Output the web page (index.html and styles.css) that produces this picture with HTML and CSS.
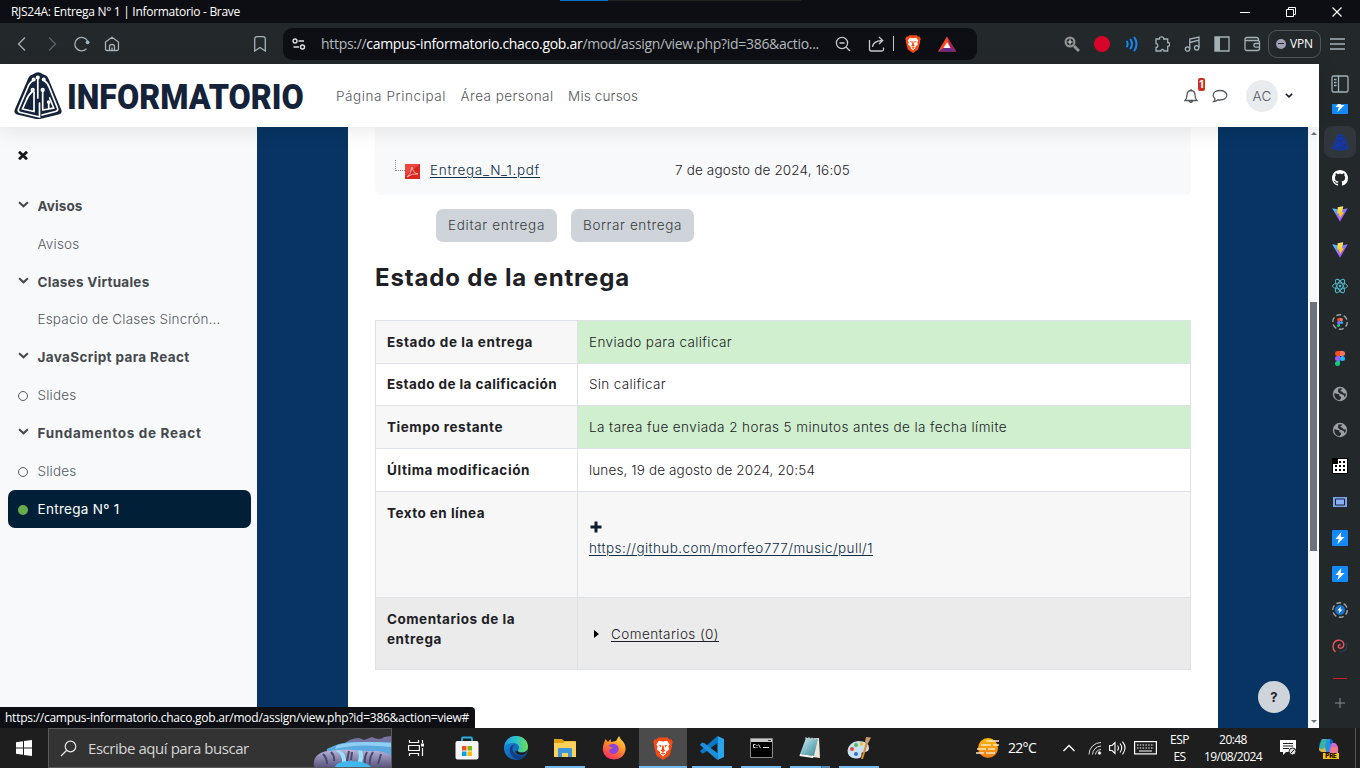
FILE: index.html
```html
<!DOCTYPE html>
<html lang="es">
<head>
<meta charset="utf-8">
<title>RJS24A: Entrega N° 1 | Informatorio</title>
<link rel="stylesheet" href="styles.css">
</head>
<body>
<svg class="defs" width="0" height="0">
  <defs>
    <linearGradient id="vp" x1="0" y1="0" x2="1" y2="1"><stop offset="0" stop-color="#41d1ff"/><stop offset=".6" stop-color="#9a5cff"/><stop offset="1" stop-color="#bd34fe"/></linearGradient>
    <linearGradient id="vy" x1="0" y1="0" x2="0" y2="1"><stop offset="0" stop-color="#ffea83"/><stop offset=".3" stop-color="#ffdd35"/><stop offset="1" stop-color="#ffa800"/></linearGradient>
    <linearGradient id="edgeA" x1="0" y1="0" x2="1" y2="0"><stop offset="0" stop-color="#1e9de0"/><stop offset=".5" stop-color="#2fc3c8"/><stop offset="1" stop-color="#6fdc4e"/></linearGradient>
    <linearGradient id="edgeB" x1="0" y1="0" x2="1" y2="1"><stop offset="0" stop-color="#1b93e0"/><stop offset="1" stop-color="#0c4a9c"/></linearGradient>
    <linearGradient id="ff" x1=".8" y1="0" x2=".2" y2="1"><stop offset="0" stop-color="#ffe040"/><stop offset=".45" stop-color="#ff8a2a"/><stop offset="1" stop-color="#f5246b"/></linearGradient>
    <linearGradient id="note" x1="0" y1="0" x2="1" y2="1"><stop offset="0" stop-color="#d9f2f5"/><stop offset=".5" stop-color="#7db9c6"/><stop offset="1" stop-color="#3f8798"/></linearGradient>
    <linearGradient id="sun" x1="0" y1="0" x2="0" y2="1"><stop offset="0" stop-color="#ffb900"/><stop offset="1" stop-color="#f17a1c"/></linearGradient>
    <linearGradient id="rock" x1="0" y1="0" x2="0" y2="1"><stop offset="0" stop-color="#b9b7dc"/><stop offset="1" stop-color="#5a5780"/></linearGradient>
    <symbol id="brave" viewBox="0 0 20 24"><path d="M5.500 1.500h9l2 2 1.800-.2 1.500 3-1 2.300.3 1.500-2.600 9.400L10 24l-6.500-4.500L.9 10.100l.3-1.500-1-2.300 1.500-3 1.800.2z" fill="#fb4a12"/><path d="M6 4.800l4 .6 4-.6 2.600 3.400-1.300 2.600.9 2.500-3.500 3 .6 1.300L10 20.500l-3.300-2.900.6-1.300-3.500-3 .9-2.500-1.300-2.600z" fill="#fff"/><path d="M5.500 8.500l3 1-.6 2zM14.500 8.500l-3 1 .6 2zM9.300 9.500h1.400l.5 4 1.300 1-2.500 1.700-2.500-1.700 1.300-1zM7.500 17.500l2.500-1 2.500 1-2.500 1z" fill="#fb4a12"/></symbol>
    <symbol id="vite" viewBox="0 0 16 16"><path d="M.2 2.300L8 15.800l7.800-13.500L8 3.700z" fill="url(#vp)"/><path d="M11.300.2L5.700 1.300l-.4 6.500 2-.4-.6 2.500 1.300-.3-.8 3.700L12 6.300l-2.100.3z" fill="url(#vy)"/></symbol>
    <symbol id="globe" viewBox="0 0 16 16"><circle cx="8" cy="8" r="7.200" fill="#9aa0a3"/><path d="M2.200 7.300c1.800-.6 2.500.9 4 .8 1.700 0 1.400 1.200.8 2 1 .3 2.300.6 2 2-.2 1-1.200 1.500-1.600 2.200C4.500 14 2 11.500 2.200 7.300zM6 2.800c2-1 3.300-.6 4.600 0-.8 1-2 .8-2.300 2 .8.900 2 .4 2.600 1.600.8 1.300 1.900 1.100 3 .8.100 2-.6 3.200-1.200 4-.6-.9-.6-2.400-2.100-2.700C8.400 8.200 7 7.300 6.200 6.100c-.8-1.100.7-2-.2-3.300z" fill="#25292c"/></symbol>
    <symbol id="bolt" viewBox="0 0 16 16"><rect width="16" height="16" rx="1.200" fill="#1389fd"/><path d="M9.300 2L3.500 9h3.300l-1.500 5.300L12.500 7H8.700z" fill="#fff"/></symbol>
    <symbol id="figma" viewBox="0 0 10 15"><path d="M2.500 0H5v5H2.500a2.500 2.500 0 010-5z" fill="#f24e1e"/><path d="M5 0h2.500a2.500 2.500 0 010 5H5z" fill="#ff7262"/><path d="M2.500 5H5v5H2.500a2.500 2.500 0 010-5z" fill="#a259ff"/><circle cx="7.500" cy="7.500" r="2.500" fill="#1abcfe"/><path d="M2.500 10H5v2.500A2.500 2.500 0 112.500 10z" fill="#0acf83"/></symbol>
    <symbol id="prism" viewBox="0 0 48 48"><path d="M19.500 2q4.500-3.500 9 0l4 1.800Q34 5 35 8l12 29q2 4.500-2.500 5.500L28 46.500q-4 1-8 0L3 42.500Q-1 41.500 1 37L13.500 8q1-3 2.500-4.200z" fill="currentColor"/><g class="prism-lines" fill="none" stroke-width="1.700" stroke-linecap="round"><path d="M23.800 6v20M19.700 8Q15 11 13.500 16L4.500 37q-1 2.800 2 3.500L25.500 45V31M29.700 8Q34 11 35.500 16l8 20q1 2.800-2 3.500L28 43M18.700 19Q14 23 12 29l-3.500 8L20 39.500V20M28.700 18v19.500M34.700 31v5.500M28.700 38l11-2-4-10"/><circle cx="18.700" cy="18" r="1.300"/><circle cx="28.700" cy="18" r="1.300"/><circle cx="19.700" cy="7.500" r="1.200"/><circle cx="29.700" cy="7.500" r="1.200"/><circle cx="23.800" cy="5.500" r="1.200"/><circle cx="34.700" cy="30" r="1"/></g></symbol>
    <symbol id="chev" viewBox="0 0 10 6"><path d="M1 1l4 3.700L9 1" fill="none" stroke="currentColor" stroke-width="1.900"/></symbol>
  </defs>
</svg>

<div class="titlebar">
  <span class="title"><span class="m-title">RJS24A: Entrega N° 1 | Informatorio - Brave</span></span>
  <div class="loading"><i></i></div>
  <div class="winbtns">
    <svg width="10" height="12" viewBox="0 0 10 12"><path d="M0 6.500h10" stroke="#fff"/></svg>
    <svg width="10" height="12" viewBox="0 0 10 12"><path d="M.5 3.500h7v7h-7zM2.500 3V1.500h7v7H8" fill="none" stroke="#fff"/></svg>
    <svg width="10" height="12" viewBox="0 0 10 12"><path d="M.5 1.500l9 9M9.500 1.500l-9 9" stroke="#fff" stroke-width="1.200"/></svg>
  </div>
</div>

<div class="toolbar">
  <div class="navbtns">
    <svg width="16" height="16" viewBox="0 0 16 16"><path d="M11 1.500L4.500 8l6.500 6.500" class="ic"/></svg>
    <svg width="16" height="16" viewBox="0 0 16 16"><path d="M5 1.500L11.500 8 5 14.500" class="ic dim"/></svg>
    <svg width="16" height="16" viewBox="0 0 16 16"><path d="M12.500 12.700A6.700 6.700 0 1113.500 5" class="ic"/><circle cx="13.600" cy="6.300" r="1.900" fill="#a3b2b9"/></svg>
    <svg width="16" height="16" viewBox="0 0 16 16"><path d="M1.500 6L8 1.200 14.500 6v7q0 1.500-1.500 1.500H3Q1.500 14.500 1.500 13zM5.500 14.500v-4q0-2 2.500-2t2.500 2v4M8 14.500v-3" class="ic"/></svg>
  </div>
  <svg class="bookmark" width="12" height="16" viewBox="0 0 12 16"><path d="M.7 3Q.7.700 3 .7h6q2.300 0 2.300 2.300v12L6 11.500.7 15z" class="ic"/></svg>
  <div class="omnibox">
    <svg width="14" height="12" viewBox="0 0 14 12" fill="none" stroke="#dde1e3" stroke-width="1.400"><circle cx="3" cy="3" r="2"/><circle cx="10.500" cy="9" r="2"/><path d="M6.500 3H12M1.500 9h5.500"/></svg>
    <span class="url"><span class="m-url">https://<b>campus-informatorio.chaco.gob.ar</b>/mod/assign/view.php?id=386&amp;actio...</span></span>
    <svg width="16" height="16" viewBox="0 0 16 16"><circle cx="7" cy="7" r="5.600" class="ic l"/><path d="M4.500 7h5M11 11l4 4" class="ic l"/></svg>
    <svg class="share" width="17" height="16" viewBox="0 0 17 16"><path d="M1.500 4v9q0 2 2 2H14q1.500 0 1.500-1.500v-2M4.500 11Q5 5 14 4.500M11 1l3.700 3.500L11 8" class="ic l"/></svg>
    <i class="vsep"></i>
    <svg class="shield" width="16" height="19"><use href="#brave"/></svg>
    <svg class="bat" width="18" height="16" viewBox="0 0 18 16"><path d="M9 .500L0 15.500h18z" fill="#ff4724"/><path d="M9 .500l9 15-5.500-3.500z" fill="#9e1f63"/><path d="M0 15.500h18L12.500 12h-7z" fill="#662d91"/><path d="M9 6.200L12.500 12h-7z" fill="#fff"/></svg>
  </div>
  <div class="exts">
    <svg width="16" height="16" viewBox="0 0 16 16"><circle cx="6" cy="6" r="4.400" fill="none" stroke="#929292" stroke-width="2.200"/><path d="M10 10l5 5" stroke="#929292" stroke-width="3"/><path d="M3.500 6h5M6 3.500v5" stroke="#ddd" stroke-width="1.200"/></svg>
    <svg width="16" height="16" viewBox="0 0 16 16"><circle cx="8" cy="8" r="8" fill="#d90429"/></svg>
    <svg width="16" height="16" viewBox="0 0 16 16" fill="none" stroke="#1687f0" stroke-width="2" stroke-linecap="round"><path d="M3 5.500q1.500 2.500 0 5M6.500 3.500q3 4.500 0 9M10.500 1.500q4 6.500 0 13"/></svg>
    <svg width="16" height="16" viewBox="0 0 16 16"><path d="M2 3h3.500Q5 .8 7.500.8T9.700 3h4v3.500q2 0 2 2t-2 2v4.500H10q.2-1.500-1.500-1.500T7 15H2v-3.500q2 0 1.800-2T2 7.500z" class="ic"/></svg>
    <svg width="16" height="16" viewBox="0 0 16 16"><path d="M5.800 13V3l9.200-2v10.500M5.800 6.500L15 4.200" class="ic"/><circle cx="3.500" cy="13" r="2.200" class="ic"/><circle cx="12.700" cy="11.800" r="2.200" class="ic"/></svg>
    <svg width="16" height="16" viewBox="0 0 16 16"><path d="M1 1h14v14H1z" class="ic"/><path d="M1 1h5v14H1z" fill="#a3b2b9"/></svg>
    <svg width="17" height="16" viewBox="0 0 17 16"><path d="M1 5V3.500Q1 1.500 3 1.500h9.500q2 0 2 2V5M1 4.500h12.500q2 0 2 2v6q0 2-2 2H3q-2 0-2-2zM15.500 7.500h-4q-1.700 0-1.700 1.800t1.700 1.800h4" class="ic"/></svg>
  </div>
  <div class="vpn"><i></i><span class="m-vpn">VPN</span></div>
  <svg class="burger" width="15" height="12" viewBox="0 0 15 12"><path d="M0 1h15M0 6h15M0 11h15" class="ic"/></svg>
</div>

<div class="middle">
  <div class="page">
    <header class="header">
      <svg class="logo" width="48" height="48"><use href="#prism"/></svg>
      <span class="brand"><span class="m-brand">INFORMATORIO</span></span>
      <nav class="nav"><a class="m-n1">Página Principal</a><a class="m-n2">Área personal</a><a class="m-n3">Mis cursos</a></nav>
      <div class="user">
        <span class="bell"><svg width="14" height="16" viewBox="0 0 14 16" fill="none" stroke="#555a5e" stroke-width="1.300"><path d="M1 12.500q2-2 2-5.500 0-4.200 4-4.500 4 .3 4 4.500 0 3.500 2 5.500zM7 1v1.500"/><path d="M5.500 13.300q1.500 2.200 3 0z" fill="#555a5e"/></svg><em>1</em></span>
        <svg class="chat" width="16" height="14" viewBox="0 0 16 14"><path d="M8 1.500c4 0 6.800 2 6.800 4.800S12 11 8 11q-1.200 0-2-.2Q4 12.700 1.500 12.700 3 11.300 3 9.700 1.200 8.300 1.200 6.300C1.200 3.500 4 1.500 8 1.500z" fill="none" stroke="#555a5e" stroke-width="1.300"/></svg>
        <span class="avatar"><span class="m-ac">AC</span></span>
        <svg class="caret" width="8" height="5"><use href="#chev"/></svg>
      </div>
    </header>
    <div class="content">
      <aside class="drawer">
        <div class="close"><svg width="10" height="9" viewBox="0 0 10 9"><path d="M1 .8l8 7.400M9 .8L1 8.200" stroke="#16191c" stroke-width="2.900"/></svg></div>
        <div class="row sec"><svg class="ch" width="11" height="7"><use href="#chev"/></svg><span class="m-s1">Avisos</span></div>
        <div class="row"><span class="m-s2">Avisos</span></div>
        <div class="row sec"><svg class="ch" width="11" height="7"><use href="#chev"/></svg><span class="m-s3">Clases Virtuales</span></div>
        <div class="row"><span class="m-s4">Espacio de Clases Sincrón...</span></div>
        <div class="row sec"><svg class="ch" width="11" height="7"><use href="#chev"/></svg><span class="m-s5">JavaScript para React</span></div>
        <div class="row"><i class="dot"></i><span class="m-s6">Slides</span></div>
        <div class="row sec"><svg class="ch" width="11" height="7"><use href="#chev"/></svg><span class="m-s7">Fundamentos de React</span></div>
        <div class="row"><i class="dot"></i><span class="m-s6">Slides</span></div>
        <div class="row active"><i class="dot"></i><span class="m-s8">Entrega Nº 1</span></div>
      </aside>
      <main class="main">
        <div class="sheet">
          <div class="filebox">
            <i class="tree"></i>
            <svg class="pdf" width="15" height="15" viewBox="0 0 15 15"><rect width="15" height="15" fill="#d9261f"/><path d="M0 0h15L0 12z" fill="#ee4540"/><path d="M2 13Q6 10 7 3q1 6 6 7Q7 9 2 13" fill="none" stroke="#f9b5ae" stroke-width="1"/></svg>
            <a class="file"><span class="m-f1">Entrega_N_1.pdf</span></a>
            <span class="m-f2">7 de agosto de 2024, 16:05</span>
          </div>
          <div class="buttons"><button class="b1"><span class="m-b1">Editar entrega</span></button><button class="b2"><span class="m-b2">Borrar entrega</span></button></div>
          <h3><span class="m-h">Estado de la entrega</span></h3>
          <table>
            <tr class="r1 odd"><th><span class="m-t1">Estado de la entrega</span></th><td class="ok"><span class="m-d1">Enviado para calificar</span></td></tr>
            <tr class="r2"><th><span class="m-t2">Estado de la calificación</span></th><td><span class="m-d2">Sin calificar</span></td></tr>
            <tr class="r3 odd"><th><span class="m-t3">Tiempo restante</span></th><td class="ok"><span class="m-d3">La tarea fue enviada 2 horas 5 minutos antes de la fecha límite</span></td></tr>
            <tr class="r4"><th><span class="m-t4">Última modificación</span></th><td><span class="m-d4">lunes, 19 de agosto de 2024, 20:54</span></td></tr>
            <tr class="r5 odd"><th><span class="m-t5">Texto en línea</span></th><td><svg class="plus" width="12" height="12" viewBox="0 0 12 12"><path d="M6 .500v11M.5 6h11" stroke="#0b1e30" stroke-width="3"/></svg><br><a class="m-d5">https://github.com/morfeo777/music/pull/1</a></td></tr>
            <tr class="r6 hov"><th><span class="m-t6">Comentarios de la</span><br><span class="m-t7">entrega</span></th><td><svg class="tri" width="5" height="8" viewBox="0 0 5 8"><path d="M0 0l5 4-5 4z"/></svg><a class="m-d6">Comentarios (0)</a></td></tr>
          </table>
        </div>
        <div class="help">?</div>
      </main>
      <div class="scroll"><b class="up"></b><i></i><b class="down"></b></div>
    </div>
    <div class="status"><span class="m-st">https://campus-informatorio.chaco.gob.ar/mod/assign/view.php?id=386&amp;action=view#</span></div>
  </div>
  <div class="side">
    <svg class="panel" width="18" height="18" viewBox="0 0 18 18"><rect x="1" y="1" width="16" height="16" rx="1.500" class="ic"/><path d="M7.500 1v16" class="ic"/><path d="M3 4.500h2.500M3 7.500h2.500M3 10.500h2.500" class="ic"/></svg>
    <div class="clip"><svg width="16" height="16"><use href="#bolt"/></svg></div>
    <div class="cell sel"><svg class="mini" width="17" height="17"><use href="#prism"/></svg></div>
    <div class="cell"><svg width="16" height="16" viewBox="0 0 16 16"><path fill="#fff" d="M8 0C3.580 0 0 3.580 0 8c0 3.540 2.290 6.530 5.470 7.590.4.070.55-.17.55-.38 0-.19-.01-.82-.01-1.490-2.010.37-2.530-.49-2.690-.94-.09-.23-.48-.94-.82-1.130-.28-.15-.68-.52-.01-.53.63-.01 1.080.58 1.230.82.72 1.210 1.870.87 2.330.66.070-.52.28-.87.51-1.070-1.780-.2-3.640-.89-3.640-3.950 0-.87.31-1.590.82-2.150-.08-.2-.36-1.020.08-2.120 0 0 .67-.21 2.200.82.640-.18 1.320-.27 2-.27s1.360.09 2 .27c1.530-1.040 2.200-.82 2.200-.82.44 1.100.16 1.920.08 2.120.51.560.82 1.270.82 2.150 0 3.070-1.870 3.750-3.650 3.950.29.25.54.73.54 1.480 0 1.070-.01 1.930-.01 2.200 0 .21.15.46.55.38A8.010 8.010 0 0016 8c0-4.420-3.580-8-8-8z"/></svg></div>
    <div class="cell"><svg width="16" height="16"><use href="#vite"/></svg></div>
    <div class="cell"><svg width="16" height="16"><use href="#vite"/></svg></div>
    <div class="cell"><svg width="16" height="16" viewBox="0 0 16 16" fill="none" stroke="#53b9cc" stroke-width=".9"><ellipse cx="8" cy="8" rx="7.500" ry="3"/><ellipse cx="8" cy="8" rx="7.500" ry="3" transform="rotate(60 8 8)"/><ellipse cx="8" cy="8" rx="7.500" ry="3" transform="rotate(120 8 8)"/><circle cx="8" cy="8" r="1" fill="#53b9cc"/></svg></div>
    <div class="cell ring"><svg width="16" height="16" viewBox="0 0 16 16"><circle cx="8" cy="8" r="7.300" class="dash"/></svg><svg class="inner" width="6" height="9"><use href="#figma"/></svg></div>
    <div class="cell"><svg width="10" height="15"><use href="#figma"/></svg></div>
    <div class="cell"><svg width="16" height="16"><use href="#globe"/></svg></div>
    <div class="cell"><svg width="16" height="16"><use href="#globe"/></svg></div>
    <div class="cell"><svg width="16" height="16" viewBox="0 0 16 16"><path d="M0 0h16v16H0z"/><path d="M6 1h9v14H1V6h5z" fill="#fff"/><path d="M7 3h2v2H7zM11 3h2v2h-2zM3 7h2v2H3zM7 7h2v2H7zM11 7h2v2h-2zM3 11h2v2H3zM7 11h2v2H7zM11 11h2v2h-2z"/></svg></div>
    <div class="cell"><svg width="14" height="10" viewBox="0 0 14 10"><path d="M0 0h14v10H0z" fill="#7ba4ee"/><path d="M2.500 2h9v6h-9z" fill="#8ab0f5" stroke="#1b2130"/></svg></div>
    <div class="cell"><svg width="16" height="16"><use href="#bolt"/></svg></div>
    <div class="cell"><svg width="16" height="16"><use href="#bolt"/></svg></div>
    <div class="cell"><svg width="16" height="16" viewBox="0 0 16 16"><circle cx="8" cy="8" r="7.300" class="dash"/><circle cx="8" cy="8" r="5" fill="#1674d0"/><path d="M8.800 4.500L5.500 8.500h2l-.8 3L10.500 7.500H8.500z" fill="#fff"/></svg></div>
    <div class="cell"><svg width="16" height="16" viewBox="0 0 16 16" fill="none" stroke-linecap="round"><path d="M8.500 14q5-.5 6-4.500.500-2-.500-4" stroke="#2d3750" stroke-width="1.500"/><path d="M3 13.500C-.5 9.500 1 3 6 2.200c4.500-.7 6.500 3 5.500 6-.9 2.600-5 2.700-5.300.3-.1-1.400 1-2 2-1.500" stroke="#e8555a" stroke-width="1.400"/></svg></div>
    <div class="cell last"><i></i></div>
    <svg class="add" width="10" height="10" viewBox="0 0 10 10"><path d="M5 0v10M0 5h10" stroke="#858c90"/></svg>
  </div>
</div>

<div class="taskbar">
  <svg class="win" width="16" height="16" viewBox="0 0 16 16"><path d="M0 2.200l7-1v6.300H0zM8 1.100L16 0v7.500H8zM0 8.500h7v6.300l-7-1zM8 8.500h8V16l-8-1.100z" fill="#fff"/></svg>
  <div class="search">
    <svg width="17" height="17" viewBox="0 0 17 17" fill="none" stroke="#e8e8e8" stroke-width="1.200"><circle cx="10.500" cy="6.500" r="5.300"/><path d="M6.500 10.500L1 16"/></svg>
    <span class="m-se">Escribe aquí para buscar</span>
    <svg class="falls" width="78" height="32" viewBox="0 0 78 32"><path d="M30 10Q36 3 46 3l5 2 8-3q8 4 12 0l7-1v18H30z" fill="#77749f"/><path d="M14 14Q30 5 50 7h28v24H12z" fill="#5aa9e0"/><path d="M24 10q20-5 54-2v4Q44 8 22 14z" fill="#8fd0f2"/><path d="M1 32q-2-14 14-16 20-3 34 0h16q13 2 13 6v10z" fill="url(#rock)"/><path d="M10 19q4 4 4 10M18 17q4 4 3 9M36 16l-2 10M39 17l-1 8M54 17q-3 5-2 12M60 17q-4 6-3 12M68 19l-3 10" fill="none" stroke="#4b476f" stroke-width="2"/><path d="M22 15.500q8 3 7 13h4q1-10-6-13zM45 15.500q2 7-1 13h5q2-7 0-13z" fill="#9be0fa"/><path d="M22 32q2-6 16-6t20 6z" fill="#40b8ee"/></svg>
  </div>
  <svg class="tv" width="17" height="16" viewBox="0 0 17 16" fill="none" stroke="#f4f4f4" stroke-width="1.200"><path d="M1.500 0v2.500h9V0M1.500 16v-2.500h9V16M.6 5.500h10.800v5H.6zM14.500 0v3M14.500 8v8"/><path d="M13 3.500h3v3h-3z" fill="#f4f4f4" stroke="none"/></svg>
  <div class="apps">
    <div class="app"><svg width="24" height="24" viewBox="0 0 24 24"><path d="M7 7V2.500q0-1 1-1h8q1 0 1 1V7" fill="none" stroke="#27b0e6" stroke-width="1.800"/><rect y="5" x=".5" width="23" height="18.500" rx="2" fill="#f5f5f5"/><path d="M7 10h4.500v4.500H7z" fill="#f25022"/><path d="M12.500 10H17v4.500h-4.500z" fill="#7fba00"/><path d="M7 15.500h4.500V20H7z" fill="#00a4ef"/><path d="M12.500 15.500H17V20h-4.500z" fill="#ffb900"/></svg></div>
    <div class="app"><svg width="24" height="24" viewBox="0 0 24 24"><circle cx="12" cy="12" r="12" fill="url(#edgeB)"/><path d="M.5 10C1.500 4 6 0 12 0c7 0 12 5 12 10.500 0 4-3 6-6 6-2.500 0-4-1-4-2 0-.8 1-1.500 1-3 0-2.500-2.500-4.500-6-4.500-4 0-7.500 2-8.500 3z" fill="url(#edgeA)"/><path d="M8.500 13c0-2 1.500-4 3-4.500C7 8 5 12 6 16c1 4.500 5 7.500 8.500 7.700 3.500-.7 6-2.700 7.500-5.200-6 3-13 0-13.500-5.500z" fill="#123e84"/><path d="M14 14.500q-.5 2 4 2 4 0 5.500-3-1 5-4.500 5.200-6 1-8-3.200z" fill="#1e1e1e"/></svg></div>
    <div class="app run"><svg width="22" height="20" viewBox="0 0 22 20"><path d="M0 1h8l2 2h11q1 0 1 1v15H0z" fill="#e0a010"/><path d="M0 5h9l2-1.500h11V19H0z" fill="#fdd25c"/><path d="M4 19v-8q0-1 1-1h12q1 0 1 1v8h-4v-4H8v4z" fill="#3b96dc"/></svg></div>
    <div class="app"><svg width="24" height="24" viewBox="0 0 24 24"><path d="M2 7l1.500-4L6 6l2.500-3 .5 3 5-1 3-5q1 3 4 5.500 3 4 2.500 8.500Q22 23 12 23.500 2 23 .8 14 .5 10 2 7z" fill="url(#ff)"/><path d="M8 8.500q4-2 7.500 1 2.500 4-.5 7-4 3-7 0Q5.500 13 11 12L6.500 10z" fill="#8b45d8"/></svg></div>
    <div class="app on"><svg width="20" height="24"><use href="#brave"/></svg></div>
    <div class="app run"><svg width="24" height="24" viewBox="0 0 24 24"><path d="M17.500 0L24 3v18l-6.500 3z" fill="#2aa5ee"/><path d="M17.500 0L0 15l2 2.500 2-.5L18 6.500z" fill="#0a78c8"/><path d="M17.500 24L0 9l2-2.500 2 .5 14 10.500z" fill="#1c90dc"/></svg></div>
    <div class="app run"><svg width="23" height="20" viewBox="0 0 23 20"><path d="M.5.500h22v19H.5z" fill="#000" stroke="#8a8a8a"/><path d="M1 1h21v3H1z" fill="#c9c9c9"/><path d="M18 2.500h3" stroke="#333"/><path d="M5.500 6.500H3.500v3h2M7 7v1M7 9v1M8.500 6.500l2 3.500M13 9.500h6" stroke="#ddd" fill="none"/></svg></div>
    <div class="app run two"><svg width="24" height="24" viewBox="0 0 24 24"><path d="M8 3l13-1 1 20-7-1z" fill="#ece8d8"/><path d="M8 2l12 1-4 17-14-2z" fill="url(#note)"/><path d="M2 18l14 2-1 2L1.500 20z" fill="#fafafa"/><path d="M8 1v2M11 1v2M14 1.500v2M17 2v2" stroke="#ccc"/></svg></div>
    <div class="app run"><svg width="24" height="24" viewBox="0 0 24 24"><path d="M11 5q11 0 11 7 0 4-5 4-3 0-2.500 3 0 4-6 3.500-8-1-8-8Q2 6 11 5z" fill="#c8e0f0"/><circle cx="5" cy="13" r="2" fill="#e8443a"/><circle cx="9" cy="9" r="2" fill="#58b958"/><circle cx="14.500" cy="8" r="1.800" fill="#f3c02c"/><circle cx="9" cy="18" r="2" fill="#3a6cd0"/><path d="M14 23l5-17 2 1-5 16z" fill="#e08a2c"/><path d="M18 6l1-5 5 .5-3 6z" fill="#c99b6c"/></svg></div>
  </div>
  <div class="weather">
    <svg width="24" height="22" viewBox="0 0 24 22"><circle cx="12" cy="11" r="10" fill="url(#sun)"/><path d="M10 4h13M5 8h10M17 8h6M1 12h9M12 12h7M0 16h8M10 16h9" stroke="#fde8c8" stroke-width="1.700"/></svg>
    <span class="m-we">22°C</span>
  </div>
  <div class="tray">
    <svg width="12" height="8" viewBox="0 0 12 8"><path d="M.5 7L6 1.500 11.500 7" fill="none" stroke="#fff" stroke-width="1.300"/></svg>
    <svg class="wifi" width="14" height="14" viewBox="0 0 14 14" fill="none" stroke="#ddd"><path d="M1 13.500A12 12 0 0113 1.500M4.500 13.500A9 9 0 0113 5M7.500 13.500A6 6 0 0113 8.500"/><circle cx="11.500" cy="12" r="1.300" fill="#fff"/></svg>
    <svg class="vol" width="17" height="14" viewBox="0 0 17 14" fill="none" stroke="#fff" stroke-width="1.100"><path d="M.6 4.500h2.500L6 1.500v11l-2.900-3H.6zM8.500 4.500q2 2.500 0 5M11 2.500q3.500 4.500 0 9M13.500 .7q5 6.300 0 12.600"/></svg>
    <svg class="kb" width="23" height="14" viewBox="0 0 23 14"><rect x=".6" y=".6" width="21.800" height="12.300" fill="none" stroke="#fff" stroke-width="1.200"/><path d="M3 4h17M3 7h17" stroke="#fff" stroke-dasharray="1.500 1.300"/><path d="M5 10h13" stroke="#fff"/></svg>
  </div>
  <div class="two-line lang"><span class="m-esp">ESP</span><span class="m-esp">ES</span></div>
  <div class="two-line clock"><span class="m-tm">20:48</span><span class="m-tm">19/08/2024</span></div>
  <svg class="notif" width="17" height="16" viewBox="0 0 17 16"><path d="M0 0h16v12H6l-3 3v-3H0z" fill="#fff"/><path d="M3 3.500h10M3 6h10M3 8.500h6" stroke="#1e1e1e"/><circle cx="12.500" cy="11.500" r="3.500" fill="#ddd" stroke="#1e1e1e"/><path d="M10.500 13.500l4-4" stroke="#1e1e1e"/></svg>
  <div class="copilot"><svg width="22" height="20" viewBox="0 0 22 20"><path d="M4 1h8q2 0 3 3l-3 10H6q-4 0-5-2 0-7 3-11z" fill="#2292e0"/><path d="M4 1h5L6 12q-4 2-5-1z" fill="#3ab3a0"/><path d="M1 10q3 3 6-1l1 5H5q-4 0-4-4z" fill="#e8b53a"/><path d="M12 1q2.500 0 3.500 4L12 6z" fill="#1656c0"/><path d="M14 5h3q4 2 3 10h-8l-1-2z" fill="#d866c8"/><path d="M14 9h5.500l.5 6h-8z" fill="#f07a8a"/></svg><em>PRE</em></div>
  <i class="desk"></i>
</div>
</body>
</html>
```

FILE: styles.css
```css
* { box-sizing: border-box; }
html, body { margin: 0; height: 768px; overflow: hidden; }
body { display: flex; flex-direction: column; width: 1360px; font: 300 13.500px/20px Inter, "Noto Sans", sans-serif; color: #1d2125; background: #fff; }
svg { display: block; flex: none; }
span, a { white-space: nowrap; }
.defs { position: absolute; }
.ic { fill: none; stroke: #a3b2b9; stroke-width: 1.300; }
.ic.dim { stroke: #596166; }
.ic.l { stroke: #c3c9cc; }

/* Tracking per label */
.m-title { letter-spacing: -.29px; }
.m-url { letter-spacing: -.307px; }
.m-vpn { letter-spacing: -.14px; }
.m-brand { display: inline-block; transform: scaleX(.92); transform-origin: 0 50%; }
.m-n1 { letter-spacing: .6px; }
.m-n2 { letter-spacing: .45px; }
.m-n3 { letter-spacing: .164px; }
.m-ac { letter-spacing: .23px; }
.m-s1 { letter-spacing: .112px; }
.m-s2, .m-s6 { letter-spacing: .2px; }
.m-s3 { letter-spacing: .263px; }
.m-s4 { letter-spacing: .176px; }
.m-s5 { letter-spacing: .361px; }
.m-s7 { letter-spacing: .67px; }
.m-s8 { letter-spacing: .297px; }
.m-f1 { letter-spacing: .707px; }
.m-f2 { letter-spacing: .153px; }
.m-b1 { letter-spacing: .693px; }
.m-b2 { letter-spacing: .608px; }
.m-h { letter-spacing: .838px; }
.m-t1 { letter-spacing: .599px; }
.m-t2 { letter-spacing: .416px; }
.m-t3 { letter-spacing: .54px; }
.m-t4 { letter-spacing: .589px; }
.m-t5 { letter-spacing: .47px; }
.m-t6 { letter-spacing: .505px; }
.m-t7 { letter-spacing: .576px; }
.m-d1 { letter-spacing: .379px; }
.m-d2 { letter-spacing: .34px; }
.m-d3 { letter-spacing: .42px; }
.m-d4 { letter-spacing: .127px; }
.m-d5 { letter-spacing: .425px; }
.m-d6 { letter-spacing: .429px; }
.m-st { letter-spacing: -.255px; }
.m-se { letter-spacing: -.45px; }
.m-we { letter-spacing: -.7px; }
.m-esp { letter-spacing: -.5px; }
.m-tm { letter-spacing: -.56px; }

.titlebar, .toolbar, .taskbar, .status { font-family: "Open Sans", "Noto Sans", sans-serif; font-weight: 400; color: #fff; }
.titlebar { height: 23px; flex: none; background: #0d0e13; display: flex; justify-content: space-between; padding: 0 18px 0 11px; font-size: 12px; line-height: 23px; }
.title { width: 499px; }
.loading { width: 241px; height: 1px; background: #222; margin-right: auto; margin-left: 50px; }
.loading i { display: block; width: 48px; height: 1px; background: #0a6fc9; }
.winbtns { display: flex; gap: 36px; align-items: center; }

.toolbar { height: 41px; flex: none; background: #23282b; display: flex; align-items: center; padding: 0 14px; }
.navbtns { display: flex; gap: 14px; }
.bookmark { margin-left: 134px; }
.omnibox { margin-left: 17px; width: 694px; height: 32px; border-radius: 9px; background: #0d0f14; display: flex; align-items: center; padding-left: 9px; }
.url { margin-left: 15px; width: 514px; font-size: 14px; color: #b5babd; }
.url b { font-weight: 400; color: #fff; }
.share { margin-left: 17px; }
.vsep { width: 1px; height: 15px; background: #c3c9cc; margin: 0 11px 0 8px; }
.bat { margin-left: 17px; }
.exts { display: flex; gap: 14px; margin-left: 87px; }
.vpn { margin-left: 7px; width: 53px; height: 28px; border: 1px solid #50575b; border-radius: 9px; display: flex; align-items: center; font-size: 12px; gap: 4px; padding-left: 7px; }
.vpn i { width: 10px; height: 10px; border-radius: 50%; background: linear-gradient(#23282b, #23282b) center / 6px 1px no-repeat #a1a0b5; }
.burger { margin-left: 9px; }

.middle { height: 664px; display: flex; flex: none; }
.page { width: 1319px; position: relative; display: flex; flex-direction: column; }
.header { height: 63px; background: #fff; display: flex; align-items: center; padding-left: 14px; position: relative; z-index: 2; box-shadow: 0 2px 20px rgba(0, 0, 0, .1); }
.logo { color: #14233a; }
.prism-lines { stroke: var(--line, #fff); }
.brand { width: 269px; flex: none; margin-left: 5px; padding-top: 4px; font: 900 35px/40px Roboto, sans-serif; color: #14233a; }
.nav { display: flex; color: #54585c; }
.nav a { margin-right: 14.500px; }
.user { display: flex; align-items: center; margin-left: auto; padding-right: 26px; }
.bell { position: relative; }
.bell em { position: absolute; left: 14px; top: -10px; width: 7px; height: 13px; border-radius: 2px; background: #ca3120; color: #fff; font: 700 10px/13px Inter, sans-serif; text-align: center; }
.chat { margin-left: 14px; }
.avatar { margin: 0 7px 0 18px; width: 32px; height: 32px; border-radius: 50%; background: #e9ecef; display: flex; align-items: center; justify-content: center; color: #54585c; }

.content { height: 601px; display: flex; }
.drawer { width: 257px; background: #f8f9fb; padding: 0 6px 0 8px; color: #54595e; }
.close { height: 60px; padding: 24px 0 0 10px; }
.row { height: 37.800px; padding-left: 29.500px; line-height: 38px; position: relative; border-radius: 7px; }
.sec { font-weight: 700; color: #45494d; }
.ch { position: absolute; left: 10px; top: 14px; }
.dot { position: absolute; left: 10px; top: 15px; width: 10px; height: 10px; border: 1px solid #54595e; border-radius: 50%; }
.active { background: #021f38; color: #fff; font-weight: 400; margin-top: .6px; }
.active .dot { background: #68ab4b; border: 0; }

.main { width: 1051px; background: #073463; padding-left: 91px; position: relative; }
.sheet { width: 870px; height: 601px; background: #fff; padding-left: 27px; }
.filebox { width: 816px; height: 68px; background: #f8f9fb; border-radius: 0 0 6px 6px; display: flex; padding: 33px 0 0 20px; }
.tree { width: 10px; height: 11px; border-left: 1px dotted #888; border-bottom: 1px dotted #888; }
.pdf { margin-top: 4px; }
.file { width: 245px; margin-left: 10px; }
a { text-underline-offset: 2px; }
.file, td a { text-decoration: underline; color: #0f2c45; }
.buttons { display: flex; gap: 14px; padding: 14px 0 0 61px; }
button { height: 33px; border: 0; border-radius: 7px; background: #ced4da; color: #3a3e42; font: inherit; padding: 0 0 1px; }
.b1 { width: 121px; }
.b2 { width: 123px; }
h3 { margin: 20px 0 26px; font: 700 24px/32px Inter, sans-serif; }
table { border-collapse: collapse; width: 816px; table-layout: fixed; }
th, td { border: 1px solid #dee2e6; vertical-align: top; text-align: left; padding: 11px 11px 0; }
th { width: 202px; font-weight: 700; }
tr { height: 43px; background: #fff; }
.r2 { height: 42px; }
.r2 th, .r2 td { padding-top: 10px; }
.r5 { height: 106px; }
.r6 { height: 72px; }
.odd { background: #f7f7f7; }
.hov { background: #ebebeb; }
.ok { background: #cfefcf; }
.plus { display: inline-block; margin: 18px 0 0 1px; }
.r6 td a { color: #1d2125; margin-left: 12px; }
.r6 td { padding: 26px 0 0 16px; }
.tri { display: inline-block; position: relative; top: -1px; }
.help { position: absolute; left: 1001px; top: 554px; width: 32px; height: 32px; border-radius: 50%; background: #ced4da; text-align: center; font: 700 13px/32px Inter, sans-serif; }
.scroll { width: 11px; background: #f8f9fb; position: relative; border-right: 1px solid #fff; }
.scroll i { display: block; width: 7px; height: 249px; margin: 175px 0 0 2px; background: #6a737d; }
.scroll b { position: absolute; left: 3px; border: 3px solid transparent; border-top-width: 0; border-bottom: 3px solid #6a737d; top: 5px; }
.scroll .down { top: auto; bottom: 5px; transform: scaleY(-1); }
.status { position: absolute; left: 0; bottom: 0; width: 475px; height: 21px; z-index: 3; background: #0d0f14; border-radius: 0 4px 0 0; font-size: 12px; line-height: 21px; padding-left: 5px; }

.side { width: 41px; background: #23282b; display: flex; flex-direction: column; align-items: center; padding-left: 1px; }
.panel { margin-top: 11px; }
.clip { height: 10px; margin: 11px 0 10px; overflow: hidden; display: flex; align-items: flex-end; }
.cell { width: 32px; height: 36px; flex: none; display: flex; align-items: center; justify-content: center; position: relative; }
.sel { background: #30373c; height: 32px; margin: 2px 0; border-radius: 8px; }
.mini { color: #1238b8; --line: #26334f; }
.ring .inner { position: absolute; }
.dash { fill: none; stroke: #a0a4a6; stroke-width: 1.400; stroke-dasharray: 5 2.600; }
.last { height: 28px; }
.last i { width: 14px; height: 1px; background: #d51a1a; }
.add { margin-top: 6px; }

.taskbar { height: 40px; flex: none; background: #1e1e1e; display: flex; align-items: center; }
.win { margin: 0 16px; }
.search { width: 344px; height: 40px; background: #333; border: 1px solid #5a5a5a; display: flex; align-items: center; font-size: 15px; color: #d5d5d5; padding-left: 11px; overflow: hidden; }
.search span { width: 163px; margin-left: 11px; }
.falls { align-self: flex-end; margin-left: auto; }
.tv { margin: 0 0 0 16px; }
.apps { display: flex; margin-left: 18px; }
.app { width: 48px; height: 40px; margin-right: 1px; display: flex; align-items: center; justify-content: center; position: relative; }
.on { background: #4b4b4b; }
.run::after, .on::after { content: ""; position: absolute; left: 4px; right: 4px; bottom: 0; height: 2px; background: #76b9ed; }
.on::after { left: 0; right: 0; }
.two::after { background: linear-gradient(90deg, #76b9ed 31px, #3f6280 31px, #3f6280 32px, #5488b0 32px); }
.weather { display: flex; align-items: center; gap: 8px; margin-left: 92px; font-size: 14px; }
.weather span { width: 29px; }
.tray { display: flex; align-items: center; margin-left: 26px; }
.wifi { margin-left: 13px; }
.vol { margin-left: 7px; }
.kb { margin-left: 8px; }
.two-line { display: flex; flex-direction: column; align-items: center; font-size: 12px; line-height: 17px; }
.lang { width: 19px; margin-left: 13px; }
.clock { width: 58px; margin-left: 15px; }
.notif { margin-left: 18px; }
.copilot { position: relative; margin-left: 21px; }
.copilot em { position: absolute; left: 5px; bottom: -1px; width: 16px; height: 6px; background: #ffc20e; color: #000; font: 800 6px/6px Inter, sans-serif; text-align: center; }
.desk { width: 1px; height: 40px; background: #555; margin-left: auto; margin-right: 4px; }
```
